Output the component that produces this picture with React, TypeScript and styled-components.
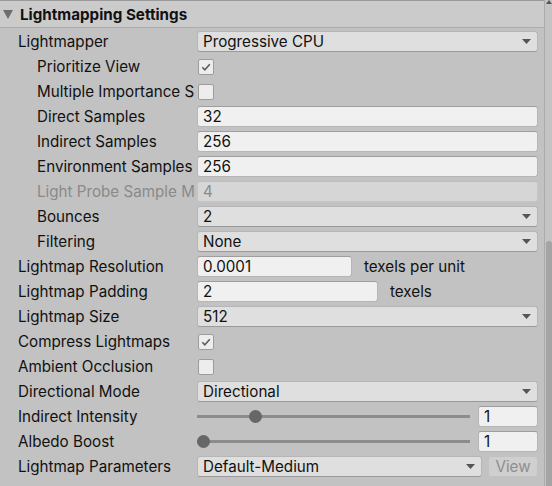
import React from "react";
import styled, { createGlobalStyle } from "styled-components";

const GlobalStyle = createGlobalStyle`
  html, body { margin: 0; padding: 0; background: #c2c2c2; }
  body { font-family: Inter, "Noto Sans", sans-serif; }
`;

const Panel = styled.div`
  width: 552px;
  height: 486px;
  display: flex;
  overflow: hidden;
  background: #c2c2c2;
`;

const Main = styled.div`
  flex: 1;
  min-width: 0;
  display: flex;
  flex-direction: column;
`;

const Header = styled.div`
  height: 28px;
  box-sizing: border-box;
  border-top: 1px solid #9a9a9a;
  border-bottom: 1px solid #acacac;
  background: #cbcbcb;
  display: flex;
  align-items: center;
  gap: 7px;
  padding-left: 3px;
  font-size: 15.2px;
  font-weight: 700;
  color: #111;
`;

const Body = styled.div`
  display: flex;
  flex-direction: column;
  padding-top: 1px;
`;

const Row = styled.div`
  height: 25px;
  display: flex;
  align-items: center;
  padding-right: 6px;
`;

const Label = styled.div<{ $indent?: boolean; $disabled?: boolean }>`
  flex: none;
  width: 197px;
  box-sizing: border-box;
  padding-left: ${(p) => (p.$indent ? 37 : 18)}px;
  padding-right: 3px;
  overflow: hidden;
  white-space: nowrap;
  font-size: 15.2px;
  color: ${(p) => (p.$disabled ? "#8a8a8a" : "#111")};
`;

const Control = styled.div<{ $gap?: number }>`
  flex: 1;
  min-width: 0;
  display: flex;
  align-items: center;
  gap: ${(p) => p.$gap ?? 8}px;
`;

const TextField = styled.div<{ $w?: number; $disabled?: boolean }>`
  ${(p) => (p.$w ? `width: ${p.$w}px; flex: none;` : "flex: 1;")}
  height: 21px;
  box-sizing: border-box;
  border-radius: 3px;
  padding: 0 5px;
  display: flex;
  align-items: center;
  font-size: 15.2px;
  white-space: nowrap;
  background: ${(p) => (p.$disabled ? "#d6d6d6" : "#f0f0f0")};
  color: ${(p) => (p.$disabled ? "#8a8a8a" : "#111")};
  border: 1px solid ${(p) => (p.$disabled ? "#c6c6c6" : "#b6b6b6")};
  border-top-color: ${(p) => (p.$disabled ? "#bcbcbc" : "#9e9e9e")};
`;

const Dropdown = styled.div`
  flex: 1;
  height: 21px;
  box-sizing: border-box;
  border-radius: 3px;
  padding: 0 6px 0 5px;
  display: flex;
  align-items: center;
  justify-content: space-between;
  font-size: 15.2px;
  color: #111;
  background: #dfdfdf;
  border: 1px solid #b6b6b6;
  border-bottom-color: #9a9a9a;
`;

const Checkbox = styled.div`
  width: 16px;
  height: 16px;
  box-sizing: border-box;
  margin-left: 1px;
  border-radius: 2px;
  background: #ededed;
  border: 1px solid #9c9c9c;
  display: flex;
  align-items: center;
  justify-content: center;
`;

const Suffix = styled.span`
  font-size: 15.2px;
  color: #111;
  white-space: nowrap;
`;

const SliderArea = styled.div`
  flex: 1;
  height: 21px;
  position: relative;
  display: flex;
  align-items: center;
`;

const Track = styled.div`
  flex: 1;
  height: 3px;
  background: #8c8c8c;
`;

const Thumb = styled.div`
  position: absolute;
  top: 50%;
  width: 13px;
  height: 13px;
  margin-top: -6.5px;
  border-radius: 50%;
  background: #676767;
`;

const ViewButton = styled.div`
  width: 50px;
  flex: none;
  height: 21px;
  box-sizing: border-box;
  border-radius: 3px;
  background: #cfcfcf;
  border: 1px solid #c2c2c2;
  display: flex;
  align-items: center;
  justify-content: center;
  font-size: 15.2px;
  color: #8e8e8e;
`;

const Scrollbar = styled.div`
  width: 8px;
  flex: none;
  box-sizing: border-box;
  border-left: 1px solid #aaaaaa;
  background: #c4c4c4;
  display: flex;
  flex-direction: column;
  align-items: flex-end;
`;

const ScrollThumb = styled.div`
  margin-top: 237px;
  width: 6px;
  flex: 1;
  border-radius: 3px 3px 0 0;
  background: #a4a4a4;
`;

const Arrow = () => (
  <svg width="9" height="5" viewBox="0 0 9 5">
    <polygon points="0,0 9,0 4.5,5" fill="#555" />
  </svg>
);

const Check = () => (
  <svg width="12" height="12" viewBox="0 0 12 12">
    <polyline points="2.3,6.3 4.8,8.8 9.8,3.2" fill="none" stroke="#5c5c5c" strokeWidth="1.6" />
  </svg>
);

const Select = ({ value }: { value: string }) => (
  <Dropdown>
    <span>{value}</span>
    <Arrow />
  </Dropdown>
);

const Slider = ({ frac, value }: { frac: number; value: string }) => (
  <Control $gap={8}>
    <SliderArea>
      <Track />
      <Thumb style={{ left: `calc(${frac} * (100% - 13px))` }} />
    </SliderArea>
    <TextField $w={60}>{value}</TextField>
  </Control>
);

export default function App() {
  return (
    <>
      <GlobalStyle />
      <Panel>
        <Main>
          <Header>
            <svg width="10" height="9" viewBox="0 0 10 9">
              <polygon points="0,0 10,0 5,9" fill="#6e6e6e" />
            </svg>
            Lightmapping Settings
          </Header>
          <Body>
            <Row>
              <Label>Lightmapper</Label>
              <Control><Select value="Progressive CPU" /></Control>
            </Row>
            <Row>
              <Label $indent>Prioritize View</Label>
              <Control><Checkbox><Check /></Checkbox></Control>
            </Row>
            <Row>
              <Label $indent>Multiple Importance S</Label>
              <Control><Checkbox /></Control>
            </Row>
            <Row>
              <Label $indent>Direct Samples</Label>
              <Control><TextField>32</TextField></Control>
            </Row>
            <Row>
              <Label $indent>Indirect Samples</Label>
              <Control><TextField>256</TextField></Control>
            </Row>
            <Row>
              <Label $indent>Environment Samples</Label>
              <Control><TextField>256</TextField></Control>
            </Row>
            <Row>
              <Label $indent $disabled>Light Probe Sample M</Label>
              <Control><TextField $disabled>4</TextField></Control>
            </Row>
            <Row>
              <Label $indent>Bounces</Label>
              <Control><Select value="2" /></Control>
            </Row>
            <Row>
              <Label $indent>Filtering</Label>
              <Control><Select value="None" /></Control>
            </Row>
            <Row>
              <Label>Lightmap Resolution</Label>
              <Control $gap={12}>
                <TextField $w={155}>0.0001</TextField>
                <Suffix>texels per unit</Suffix>
              </Control>
            </Row>
            <Row>
              <Label>Lightmap Padding</Label>
              <Control $gap={12}>
                <TextField $w={181}>2</TextField>
                <Suffix>texels</Suffix>
              </Control>
            </Row>
            <Row>
              <Label>Lightmap Size</Label>
              <Control><Select value="512" /></Control>
            </Row>
            <Row>
              <Label>Compress Lightmaps</Label>
              <Control><Checkbox><Check /></Checkbox></Control>
            </Row>
            <Row>
              <Label>Ambient Occlusion</Label>
              <Control><Checkbox /></Control>
            </Row>
            <Row>
              <Label>Directional Mode</Label>
              <Control><Select value="Directional" /></Control>
            </Row>
            <Row>
              <Label>Indirect Intensity</Label>
              <Slider frac={0.2} value="1" />
            </Row>
            <Row>
              <Label>Albedo Boost</Label>
              <Slider frac={0} value="1" />
            </Row>
            <Row>
              <Label>Lightmap Parameters</Label>
              <Control $gap={6}>
                <Select value="Default-Medium" />
                <ViewButton>View</ViewButton>
              </Control>
            </Row>
          </Body>
        </Main>
        <Scrollbar>
          <svg width="6" height="4" viewBox="0 0 6 4">
            <polygon points="3,0 6,4 0,4" fill="#555" />
          </svg>
          <ScrollThumb />
        </Scrollbar>
      </Panel>
    </>
  );
}
